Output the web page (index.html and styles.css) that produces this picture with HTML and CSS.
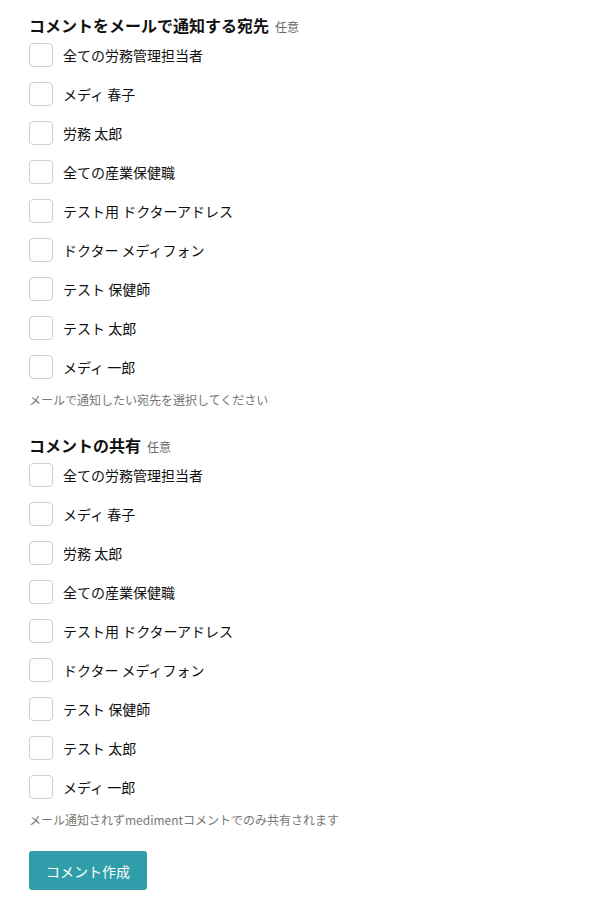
FILE: index.html
```html
<!DOCTYPE html>
<html lang="ja">
<head>
<meta charset="utf-8">
<link rel="stylesheet" href="styles.css">
</head>
<body>
<div class="form">
  <section class="group">
    <h2 class="group-title">コメントをメールで通知する宛先<span class="optional">任意</span></h2>
    <ul class="options">
      <li class="option"><span class="box"></span><span class="label">全ての労務管理担当者</span></li>
      <li class="option"><span class="box"></span><span class="label">メディ 春子</span></li>
      <li class="option"><span class="box"></span><span class="label">労務 太郎</span></li>
      <li class="option"><span class="box"></span><span class="label">全ての産業保健職</span></li>
      <li class="option"><span class="box"></span><span class="label">テスト用 ドクターアドレス</span></li>
      <li class="option"><span class="box"></span><span class="label">ドクター メディフォン</span></li>
      <li class="option"><span class="box"></span><span class="label">テスト 保健師</span></li>
      <li class="option"><span class="box"></span><span class="label">テスト 太郎</span></li>
      <li class="option"><span class="box"></span><span class="label">メディ 一郎</span></li>
    </ul>
    <p class="hint">メールで通知したい宛先を選択してください</p>
  </section>
  <section class="group">
    <h2 class="group-title">コメントの共有<span class="optional">任意</span></h2>
    <ul class="options">
      <li class="option"><span class="box"></span><span class="label">全ての労務管理担当者</span></li>
      <li class="option"><span class="box"></span><span class="label">メディ 春子</span></li>
      <li class="option"><span class="box"></span><span class="label">労務 太郎</span></li>
      <li class="option"><span class="box"></span><span class="label">全ての産業保健職</span></li>
      <li class="option"><span class="box"></span><span class="label">テスト用 ドクターアドレス</span></li>
      <li class="option"><span class="box"></span><span class="label">ドクター メディフォン</span></li>
      <li class="option"><span class="box"></span><span class="label">テスト 保健師</span></li>
      <li class="option"><span class="box"></span><span class="label">テスト 太郎</span></li>
      <li class="option"><span class="box"></span><span class="label">メディ 一郎</span></li>
    </ul>
    <p class="hint">メール通知されずmedimentコメントでのみ共有されます</p>
  </section>
  <button class="submit" type="button">コメント作成</button>
</div>
</body>
</html>
```
FILE: styles.css
```css
html, body {
  margin: 0;
  padding: 0;
  background: #fff;
}
body {
  font-family: "Noto Sans CJK JP", "Noto Sans", sans-serif;
  color: #1a1a1a;
}
.form {
  padding: 13px 0 0 29px;
  display: flex;
  flex-direction: column;
  align-items: flex-start;
}
.group {
  margin-bottom: 24px;
}
.group:last-of-type {
  margin-bottom: 22px;
}
.group-title {
  margin: 0 0 6px;
  height: 24px;
  display: flex;
  align-items: baseline;
  font-size: 16px;
  line-height: 24px;
  font-weight: 700;
  color: #111;
}
.optional {
  font-size: 12px;
  line-height: 16px;
  font-weight: 400;
  color: #666;
  margin-left: 6px;
}
.options {
  list-style: none;
  margin: 0;
  padding: 0;
  display: flex;
  flex-direction: column;
  gap: 15px;
}
.option {
  display: flex;
  align-items: center;
  height: 24px;
}
.box {
  width: 22px;
  height: 22px;
  border: 1px solid #cfcfcf;
  border-radius: 4px;
  background: #fff;
  flex: none;
}
.label {
  margin-left: 10px;
  font-size: 14px;
  line-height: 20px;
  color: #111;
}
.hint {
  margin: 12px 0 0;
  font-size: 12px;
  line-height: 18px;
  color: #777;
}
.submit {
  width: 118px;
  height: 39px;
  border: none;
  border-radius: 3px;
  background: #2f9eaa;
  color: #fff;
  font-family: "Noto Sans CJK JP", "Noto Sans", sans-serif;
  font-size: 14px;
  padding: 0;
}
```
